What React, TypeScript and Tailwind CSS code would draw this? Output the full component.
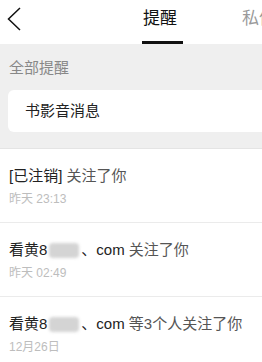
import React from "react";

const font = { fontFamily: '"Liberation Sans", "Noto Sans CJK SC", sans-serif' };

function Blur() {
  return (
    <span className="inline-block align-middle w-[30px] h-[15px] mx-[2px] bg-[#d4d4d4] blur-[1.5px] rounded-sm -mt-[2px]" />
  );
}

function Row({ children, time }: { children: React.ReactNode; time: string }) {
  return (
    <div className="border-b border-[#ebebeb] pl-[9px] pt-[17px] pb-[16px]">
      <div className="text-[15px] leading-[20px] whitespace-nowrap text-[#222]">{children}</div>
      <div className="mt-[6px] text-[12px] leading-[14px] text-[#bdbdbd]">{time}</div>
    </div>
  );
}

export default function App() {
  return (
    <div className="w-[262px] h-[362px] overflow-hidden bg-white" style={font}>
      <div className="h-[44px] flex items-start bg-white">
        <div className="pl-[7px] pt-[7px]">
          <svg width="14" height="24" viewBox="0 0 14 24" fill="none">
            <path d="M13 1 L1.5 12 L13 23" stroke="#111" strokeWidth="1.5" />
          </svg>
        </div>
        <div className="ml-[122px] pt-[7px] flex flex-col">
          <div className="text-[17px] leading-[24px] text-[#111] whitespace-nowrap">提醒</div>
          <div className="mt-[10px] -ml-[1px] w-[41px] h-[3px] bg-[#111]" />
        </div>
        <div className="ml-[59px] pt-[7px] text-[17px] leading-[24px] text-[#9a9a9a] whitespace-nowrap">私信</div>
      </div>
      <div className="bg-[#efefef] pt-[14px] pb-[16px] pl-[8px] border-b border-[#e4e4e4]">
        <div className="pl-[1px] text-[15px] leading-[20px] text-[#888]">全部提醒</div>
        <div className="mt-[12px] w-[280px] h-[42px] rounded-[6px] bg-white flex items-center pl-[17px] text-[15px] text-[#222]">
          书影音消息
        </div>
      </div>
      <Row time="昨天 23:13">
        [已注销] <span className="text-[#555]">关注了你</span>
      </Row>
      <Row time="昨天 02:49">
        看黄8<Blur />、com <span className="text-[#555]">关注了你</span>
      </Row>
      <Row time="12月26日">
        看黄8<Blur />、com <span className="text-[#555]">等3个人关注了你</span>
      </Row>
    </div>
  );
}
